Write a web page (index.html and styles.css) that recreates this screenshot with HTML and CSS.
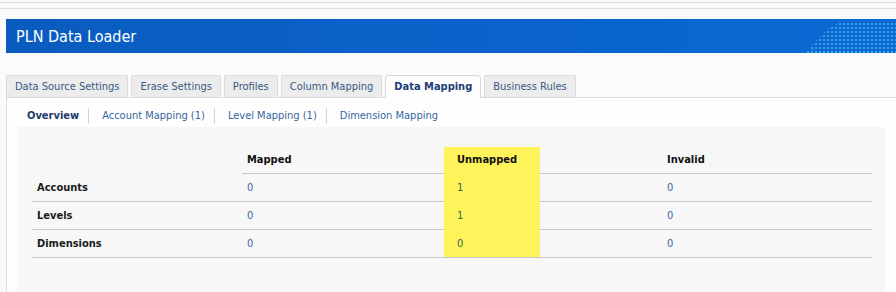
FILE: index.html
```html
<!DOCTYPE html>
<html lang="en">
<head>
  <meta charset="UTF-8">
  <meta name="viewport" content="width=device-width, initial-scale=1.0">
  <title>PLN Data Loader</title>
  <link rel="stylesheet" href="styles.css">
</head>
<body>
  <div class="chrome"></div>
  <header class="app-header">
    <h1>PLN Data Loader</h1>
  </header>
  <main>
    <nav class="tabs">
      <a class="tab">Data Source Settings</a>
      <a class="tab">Erase Settings</a>
      <a class="tab">Profiles</a>
      <a class="tab">Column Mapping</a>
      <a class="tab active">Data Mapping</a>
      <a class="tab">Business Rules</a>
    </nav>
    <section class="panel">
      <nav class="subnav">
        <a class="sub current">Overview</a>
        <a class="sub">Account Mapping (1)</a>
        <a class="sub">Level Mapping (1)</a>
        <a class="sub">Dimension Mapping</a>
      </nav>
      <div class="overview">
        <div class="table-wrap">
          <table class="summary">
            <thead>
              <tr>
                <th class="blank"></th>
                <th><span>Mapped</span></th>
                <th><span>Unmapped</span></th>
                <th><span>Invalid</span></th>
              </tr>
            </thead>
            <tbody>
              <tr>
                <td class="label"><span>Accounts</span></td>
                <td><span>0</span></td>
                <td class="unmapped"><span>1</span></td>
                <td><span>0</span></td>
              </tr>
              <tr>
                <td class="label"><span>Levels</span></td>
                <td><span>0</span></td>
                <td class="unmapped"><span>1</span></td>
                <td><span>0</span></td>
              </tr>
              <tr>
                <td class="label"><span>Dimensions</span></td>
                <td><span>0</span></td>
                <td class="unmapped"><span>0</span></td>
                <td><span>0</span></td>
              </tr>
            </tbody>
          </table>
          <div class="marker"></div>
        </div>
      </div>
    </section>
  </main>
</body>
</html>
```

FILE: styles.css
```css
body {
  margin: 0;
  background-color: #fbfbfb;
  font-family: "DejaVu Sans", Tahoma, sans-serif;
  font-stretch: condensed;
  font-size: 11px;
  color: #222;
}
.chrome {
  margin-top: 2px;
  height: 5px;
  border-top: 1px solid #dedede;
  border-bottom: 1px solid #dedede;
  margin-bottom: 10px;
}
.app-header {
  position: relative;
  margin-left: 6px;
  height: 34px;
  padding-left: 10px;
  background: linear-gradient(to right, #0a5bbf, #0a6ad4);
  overflow: hidden;
}
.app-header::after {
  content: "";
  position: absolute;
  right: 0;
  top: 3px;
  bottom: 0;
  width: 90px;
  background-image: radial-gradient(circle, rgba(90, 200, 230, 0.6) 0.7px, transparent 1.1px);
  background-size: 4px 4px;
  clip-path: polygon(0 100%, 8% 70%, 16% 45%, 24% 22%, 32% 8%, 42% 0, 100% 0, 100% 100%);
}
.app-header h1 {
  margin: 0;
  font-size: 16px;
  font-weight: normal;
  line-height: 35px;
  color: white;
}
main {
  margin-left: 6px;
  margin-top: 22px;
}
.tabs {
  display: flex;
  gap: 3px;
  height: 22px;
}
.tab {
  display: block;
  padding: 0 8px;
  line-height: 21px;
  background-color: #ececec;
  border: 1px solid #dcdcdc;
  border-bottom: none;
  color: #3a5886;
  border-radius: 2px 2px 0 0;
}
.tab.active {
  background-color: #fefefe;
  color: #1c3c78;
  font-weight: bold;
  border-color: #d8d8d8;
  border-radius: 4px 4px 0 0;
  height: 22px;
  position: relative;
  z-index: 1;
}
.panel {
  background-color: #fefefe;
  border-top: 1px solid #dcdcdc;
  border-left: 1px solid #dcdcdc;
  height: 194px;
}
.subnav {
  display: flex;
  align-items: center;
  padding: 10px 0 0 20px;
  height: 16px;
}
.sub {
  padding: 0 9px 0 13px;
  line-height: 16px;
  color: #3766a0;
  border-left: 1px solid #d4d4d4;
}
.sub:first-child {
  border-left: none;
  padding-left: 0;
}
.sub.current {
  font-weight: bold;
  color: #1d3a6a;
}
.overview {
  margin: 3px 11px 0 10px;
  padding: 19px 0 0 15px;
  height: 146px;
  background-color: #f7f7f7;
}
.table-wrap {
  position: relative;
  width: 840px;
}
.summary {
  width: 840px;
  border-collapse: collapse;
  table-layout: fixed;
}
.summary th,
.summary td {
  height: 27px;
  padding: 0 5px;
  text-align: left;
  vertical-align: middle;
  border-bottom: 1px solid #c8c8c8;
}
.summary th {
  font-weight: bold;
  color: #111;
}
.summary th.blank {
  border-bottom: none;
}
.summary td {
  color: #3a68ad;
}
.summary td.label {
  font-weight: bold;
  color: #1a1a1a;
}
.summary td.unmapped {
  color: #2b6e4c;
}
.summary span {
  position: relative;
  z-index: 2;
}
.marker {
  position: absolute;
  left: 412px;
  top: 1px;
  width: 96px;
  height: 110px;
  background-color: #fff35c;
  z-index: 1;
}
```
